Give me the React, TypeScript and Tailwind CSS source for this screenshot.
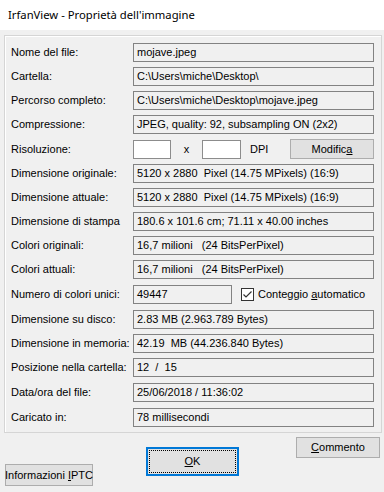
import React from "react";

type Row = { label: string; value?: string; mt: string; kind?: "res" | "num" };

const rows: Row[] = [
  { label: "Nome del file:", value: "mojave.jpeg", mt: "mt-[7px]" },
  { label: "Cartella:", value: "C:\\Users\\miche\\Desktop\\", mt: "mt-[5px]" },
  { label: "Percorso completo:", value: "C:\\Users\\miche\\Desktop\\mojave.jpeg", mt: "mt-[5px]" },
  { label: "Compressione:", value: "JPEG, quality: 92, subsampling ON (2x2)", mt: "mt-[5px]" },
  { label: "Risoluzione:", mt: "mt-[5px]", kind: "res" },
  { label: "Dimensione originale:", value: "5120 x 2880  Pixel (14.75 MPixels) (16:9)", mt: "mt-[5px]" },
  { label: "Dimensione attuale:", value: "5120 x 2880  Pixel (14.75 MPixels) (16:9)", mt: "mt-[5px]" },
  { label: "Dimensione di stampa", value: "180.6 x 101.6 cm; 71.11 x 40.00 inches", mt: "mt-[5px]" },
  { label: "Colori originali:", value: "16,7 milioni   (24 BitsPerPixel)", mt: "mt-[5px]" },
  { label: "Colori attuali:", value: "16,7 milioni   (24 BitsPerPixel)", mt: "mt-[5px]" },
  { label: "Numero di colori unici:", value: "49447", mt: "mt-[6px]", kind: "num" },
  { label: "Dimensione su disco:", value: "2.83 MB (2.963.789 Bytes)", mt: "mt-[6px]" },
  { label: "Dimensione in memoria:", value: "42.19  MB (44.236.840 Bytes)", mt: "mt-[5px]" },
  { label: "Posizione nella cartella:", value: "12  /  15", mt: "mt-[5px]" },
  { label: "Data/ora del file:", value: "25/06/2018 / 11:36:02", mt: "mt-[6px]" },
  { label: "Caricato in:", value: "78 millisecondi", mt: "mt-[6px]" },
];

function Field({ value, w }: { value: string; w: string }) {
  return (
    <div
      className={`${w} h-[19px] border border-[#828282] bg-[#f0f0f0] flex items-center pl-[3px] whitespace-pre text-black`}
    >
      {value}
    </div>
  );
}

export default function App() {
  return (
    <div className="w-[384px] h-[492px] bg-[#f0f0f0] flex flex-col font-['Liberation_Sans',Arial,sans-serif] text-[11px] text-black overflow-hidden">
      <div className="h-[30px] bg-white flex items-center pl-[8px] font-['Noto_Sans',sans-serif] text-[11.25px] text-black">
        IrfanView - Proprietà dell'immagine
      </div>
      <div className="mt-[5px] ml-[4px] w-[378px] h-[398px] border border-[#d5d5d5] shadow-[inset_1px_1px_0_#ffffff] flex flex-col pl-[6px]">
        {rows.map((r) => (
          <div key={r.label} className={`${r.mt} flex items-center ${r.kind === "res" ? "h-[20px]" : "h-[19px]"}`}>
            <div className="w-[122px] whitespace-nowrap">{r.label}</div>
            {r.kind === "res" ? (
              <div className="flex items-center h-[20px]">
                <div className="w-[38px] h-[19px] bg-white border border-[#8c8c8c] mt-[1px]" />
                <div className="w-[31px] text-center">x</div>
                <div className="w-[39px] h-[19px] bg-white border border-[#8c8c8c] mt-[1px]" />
                <div className="ml-[9px] w-[40px]">DPI</div>
                <div className="w-[84px] h-[20px] bg-[#e1e1e1] border border-[#adadad] flex items-center justify-center">
                  <span>
                    Modific<span className="underline">a</span>
                  </span>
                </div>
              </div>
            ) : r.kind === "num" ? (
              <div className="flex items-center">
                <Field value={r.value!} w="w-[99px]" />
                <div className="ml-[9px] w-[13px] h-[13px] bg-white border border-[#333333] flex items-center justify-center">
                  <svg width="11" height="11" viewBox="0 0 11 11">
                    <path d="M1.5 5.5 L4 8 L9.5 2.5" fill="none" stroke="#333333" strokeWidth="1.2" />
                  </svg>
                </div>
                <div className="ml-[4px]">
                  Conteggio <span className="underline">a</span>utomatico
                </div>
              </div>
            ) : (
              <Field value={r.value!} w="w-[241px]" />
            )}
          </div>
        ))}
      </div>
      <div className="flex items-start">
        <div className="mt-[31px] ml-[5px] w-[88px] h-[22px] bg-[#e1e1e1] border border-[#adadad] flex items-center justify-center whitespace-nowrap">
          <span>
            Informazioni <span className="underline">I</span>PTC
          </span>
        </div>
        <div className="mt-[14px] ml-[53px] w-[93px] h-[29px] bg-[#e1e1e1] border-2 border-[#0078d7] p-[1px]">
          <div className="w-full h-full border border-dotted border-black flex items-center justify-center">
            <span>
              <span className="underline">O</span>K
            </span>
          </div>
        </div>
        <div className="mt-[4px] ml-[57px] w-[84px] h-[21px] bg-[#e1e1e1] border border-[#adadad] flex items-center justify-center">
          <span>
            <span className="underline">C</span>ommento
          </span>
        </div>
      </div>
    </div>
  );
}
